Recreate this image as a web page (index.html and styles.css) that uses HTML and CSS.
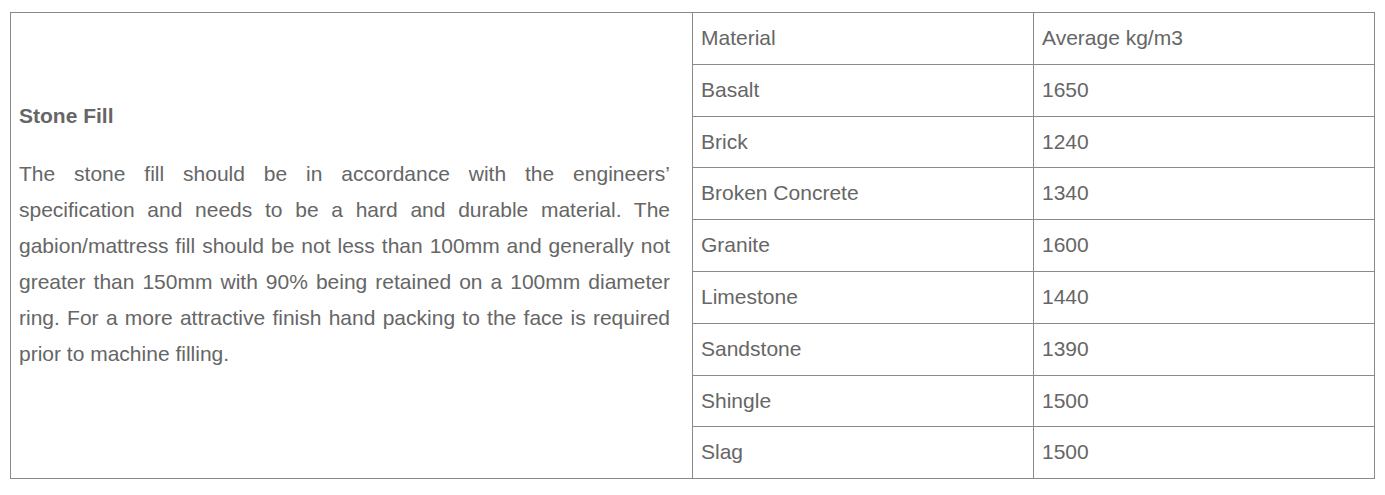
FILE: index.html
```html
<!DOCTYPE html>
<html lang="en">
<head>
<meta charset="utf-8">
<title>Stone Fill</title>
<link rel="stylesheet" href="styles.css">
</head>
<body>
<div class="panel">
  <div class="info">
    <h3 class="info-title">Stone Fill</h3>
    <p class="info-text">The stone fill should be in accordance with the engineers’ specification and needs to be a hard and durable material. The gabion/mattress fill should be not less than 100mm and generally not greater than 150mm with 90% being retained on a 100mm diameter ring. For a more attractive finish hand packing to the face is required prior to machine filling.</p>
  </div>
  <table class="density">
    <tr><td>Material</td><td>Average kg/m3</td></tr>
    <tr><td>Basalt</td><td>1650</td></tr>
    <tr><td>Brick</td><td>1240</td></tr>
    <tr><td>Broken Concrete</td><td>1340</td></tr>
    <tr><td>Granite</td><td>1600</td></tr>
    <tr><td>Limestone</td><td>1440</td></tr>
    <tr><td>Sandstone</td><td>1390</td></tr>
    <tr><td>Shingle</td><td>1500</td></tr>
    <tr><td>Slag</td><td>1500</td></tr>
  </table>
</div>
</body>
</html>
```

FILE: styles.css
```css
html, body {
  margin: 0;
  padding: 0;
  background: #ffffff;
}

body {
  padding: 12px 10px 0 10px;
  font-family: "Liberation Sans", Arial, sans-serif;
  color: #666666;
}

.panel {
  width: 1365px;
  display: grid;
  grid-template-columns: 681px 683px;
  border-top: 1px solid #8a8a8a;
  border-left: 1px solid #8a8a8a;
  border-bottom: 1px solid #8a8a8a;
  box-sizing: border-box;
}

.info {
  display: flex;
  flex-direction: column;
  justify-content: center;
  padding: 0 22px 0 8px;
}

.info-title {
  margin: 0 0 22px 0;
  font-size: 21px;
  line-height: 36px;
  font-weight: bold;
  color: #666666;
}

.info-text {
  margin: 0 0 21px 0;
  font-size: 21px;
  line-height: 36px;
  text-align: justify;
  color: #666666;
}

.density {
  border-collapse: collapse;
  width: 683px;
  margin-top: -1px;
  margin-bottom: -1px;
  table-layout: fixed;
}

.density td {
  width: 50%;
  border: 1px solid #8a8a8a;
  padding: 14px 8px;
  font-size: 21px;
  line-height: 22.8px;
  color: #666666;
  vertical-align: middle;
  text-align: left;
}
```
